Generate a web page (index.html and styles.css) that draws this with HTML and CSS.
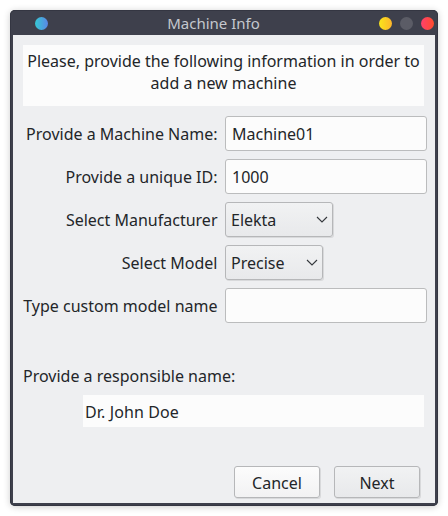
FILE: index.html
```html
<!DOCTYPE html>
<html lang="en">
<head>
<meta charset="utf-8">
<title>Machine Info</title>
<link rel="stylesheet" href="styles.css">
</head>
<body>
<main class="window">
  <header class="titlebar">
    <span class="dot dot-app"></span>
    <h1 class="title">Machine Info</h1>
    <div class="controls">
      <span class="dot dot-min"></span>
      <span class="dot dot-max"></span>
      <span class="dot dot-close"></span>
    </div>
  </header>
  <form class="content">
    <p class="intro">Please, provide the following information in order to add a new machine</p>
    <div class="fields">
      <label for="name">Provide a Machine Name:</label>
      <input class="field" id="name" type="text" value="Machine01">
      <label for="uid">Provide a unique ID:</label>
      <input class="field" id="uid" type="text" value="1000">
      <span class="label">Select Manufacturer</span>
      <button class="combo combo-maker" type="button"><span>Elekta</span><svg class="chevron" viewBox="0 0 12 7"><path d="M1 1l5 5 5-5"/></svg></button>
      <span class="label">Select Model</span>
      <button class="combo combo-model" type="button"><span>Precise</span><svg class="chevron" viewBox="0 0 12 7"><path d="M1 1l5 5 5-5"/></svg></button>
      <label for="custom">Type custom model name</label>
      <input class="field" id="custom" type="text">
    </div>
    <label class="person-label" for="person">Provide a responsible name:</label>
    <input class="person" id="person" type="text" value="Dr. John Doe">
    <footer class="actions">
      <button class="button button-light" type="button">Cancel</button>
      <button class="button" type="button">Next</button>
    </footer>
  </form>
</main>
</body>
</html>
```
FILE: styles.css
```css
* { box-sizing: border-box; }
body {
  margin: 0;
  padding: 10px;
  background: #fff;
  color: #232629;
  font: 16px/22px "Noto Sans", sans-serif;
}
.window {
  width: 428px;
  height: 496px;
  padding: 0 3px 3px;
  border-radius: 5px;
  background: #3e404c;
  box-shadow: inset 0 0 0 1px #343642, 0 1px 7px rgba(0, 0, 0, .2);
}
.titlebar {
  display: grid;
  grid-template-columns: 76px 1fr 56px;
  align-items: center;
  height: 25px;
  padding-top: 2px;
}
.title {
  margin: -2px 0 0;
  padding-right: 41px;
  color: #c5c8ce;
  font-size: 15px;
  font-weight: 400;
  line-height: 22px;
  text-align: center;
}
.dot { display: block; width: 13px; height: 13px; border-radius: 50%; }
.dot-app { margin-left: 22px; background: linear-gradient(90deg, #35c9d4, #5b86e5); }
.dot-min { background: linear-gradient(90deg, #f9e51b, #fdb52b); }
.dot-max { background: #5b5c66; }
.dot-close { background: linear-gradient(90deg, #ff416c, #ff4b2b); }
.controls { display: flex; gap: 8px; }
.content {
  height: 468px;
  padding: 10px 8px 0 10px;
  background: #eeeff1;
}
.intro {
  width: 401px;
  height: 61px;
  margin: 0 0 10px;
  padding: 5px 2px 0;
  background: #fcfcfc;
  text-align: center;
}
.fields {
  display: grid;
  grid-template-columns: 194.5px 202px;
  grid-auto-rows: 35px;
  column-gap: 7.5px;
  row-gap: 8px;
  align-items: center;
}
.fields label, .label { text-align: right; white-space: nowrap; }
input, button { margin: 0; color: inherit; font: inherit; }
.field {
  width: 202px;
  height: 35px;
  padding: 0 6px;
  border: 1px solid #bbbcbd;
  border-radius: 3px;
  background: #fcfcfc;
}
.combo, .button {
  border: 1px solid #b6b7b9;
  border-radius: 3px;
  background: linear-gradient(#f1f2f3, #e8e9eb);
  box-shadow: 1px 1px 0 rgba(0, 0, 0, .09);
}
.combo {
  display: flex;
  align-items: center;
  justify-content: space-between;
  height: 35px;
  padding: 0 4px 0 5px;
}
.combo-maker { width: 108px; }
.combo-model { width: 98px; }
.chevron { width: 12px; height: 7px; fill: none; stroke: #34383c; stroke-width: 1.1; }
.person-label { display: block; margin-top: 42px; }
.person {
  display: block;
  width: 341px;
  height: 32px;
  margin: 8px 0 0 60px;
  padding: 2px 2px 0;
  border: 0;
  background: #fcfcfc;
  letter-spacing: .12px;
}
.actions { display: flex; gap: 14px; margin: 39px 0 0 211px; }
.button { width: 86px; height: 32px; padding: 1px 0 0; }
.button-light { background: linear-gradient(#fcfcfc, #f2f2f3); }
```
